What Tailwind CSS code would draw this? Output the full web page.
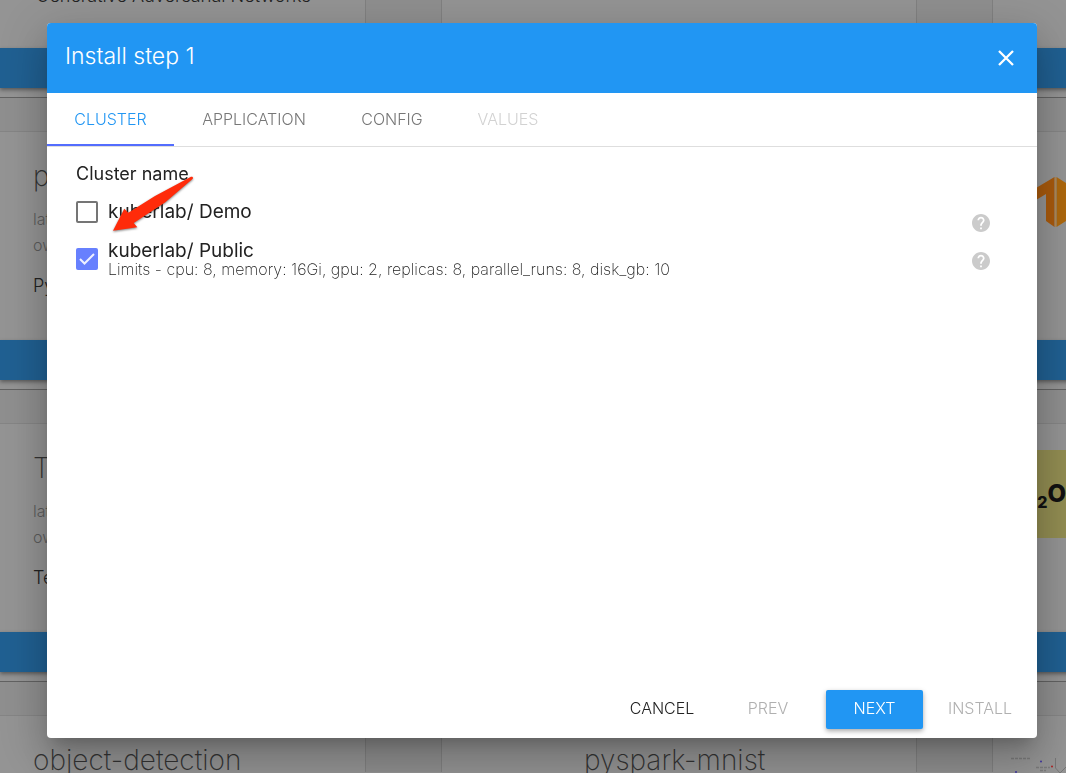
<!DOCTYPE html>
<html lang="en">
<head>
<meta charset="utf-8">
<meta name="viewport" content="width=device-width, initial-scale=1">
<title>Install step 1</title>
<script src="https://cdn.jsdelivr.net/npm/@tailwindcss/browser@4"></script>
</head>
<body class="h-screen overflow-hidden bg-[#949494] font-['Inter','Open_Sans',sans-serif] font-light text-[#222]">

<!-- Catalog behind the dialog -->
<main class="-mt-[195px] -mr-9 grid grid-cols-2" aria-hidden="true">
  <article>
    <div class="h-[34px] border-t border-[#626262] bg-[#8f8f8f]"></div>
    <div class="flex h-[209px] border-t border-[#858585]">
      <div class="flex-1 border-r border-[#818181] pt-36 pl-9 text-[18px] leading-6">Generative Adversarial Networks</div>
      <div class="w-[76px] border-r border-[#818181] bg-[#8f8f8f]"></div><div class="w-[109px]"></div>
    </div>
    <div class="mb-[9px] h-10 bg-[#206092] shadow-[0_2px_4px_rgba(0,0,0,0.4)]"></div>
  </article>
  <article>
    <div class="h-[34px] border-t border-[#626262] bg-[#8f8f8f]"></div>
    <div class="flex h-[209px] border-t border-[#858585]">
      <div class="flex-1 border-r border-[#818181]"></div>
      <div class="w-[76px] border-r border-[#818181] bg-[#8f8f8f]"></div><div class="w-[109px]"></div>
    </div>
    <div class="mb-[9px] h-10 bg-[#206092] shadow-[0_2px_4px_rgba(0,0,0,0.4)]"></div>
  </article>

  <article>
    <div class="h-[34px] border-t border-[#626262] bg-[#8f8f8f]"></div>
    <div class="h-[209px] border-t border-[#858585] pt-7 pl-[33px]">
      <h2 class="text-[28px] leading-8 font-extralight text-[#333]">pytorch</h2>
      <p class="mt-[14px] text-base leading-[26px] text-[#5c5c5c]">latest<br>owner</p>
      <p class="mt-[14px] text-[18px] leading-7">PyTorch</p>
    </div>
    <div class="mb-[9px] h-10 bg-[#206092] shadow-[0_2px_4px_rgba(0,0,0,0.4)]"></div>
  </article>
  <article>
    <div class="h-[34px] border-t border-[#626262] bg-[#8f8f8f]"></div>
    <div class="flex h-[209px] justify-end border-t border-[#858585] pt-[45px]">
      <svg class="mr-9 h-[52px] w-[30px]" viewBox="0 0 30 52" fill="none">
        <path d="M0 11 18.500 0V50L10 44V17L0 23Z" fill="#a95a0c"/>
        <path d="M20.500 0 30 6V44L20.500 50Z" fill="#ae680d"/>
        <path d="M19.500 0V50" stroke="#b08a56"/>
      </svg>
    </div>
    <div class="mb-[9px] h-10 bg-[#206092] shadow-[0_2px_4px_rgba(0,0,0,0.4)]"></div>
  </article>

  <article>
    <div class="h-[34px] border-t border-[#626262] bg-[#8f8f8f]"></div>
    <div class="h-[209px] border-t border-[#858585] pt-7 pl-[33px]">
      <h2 class="text-[28px] leading-8 font-extralight text-[#333]">TensorFlow</h2>
      <p class="mt-[14px] text-base leading-[26px] text-[#5c5c5c]">latest<br>owner</p>
      <p class="mt-[14px] text-[18px] leading-7">TensorFlow</p>
    </div>
    <div class="mb-[9px] h-10 bg-[#206092] shadow-[0_2px_4px_rgba(0,0,0,0.4)]"></div>
  </article>
  <article>
    <div class="h-[34px] border-t border-[#626262] bg-[#8f8f8f]"></div>
    <div class="flex h-[209px] justify-end border-t border-[#858585] pt-[26px]">
      <div class="mr-9 flex h-[88px] w-[76px] items-center justify-end bg-[#928d52] text-2xl font-extrabold text-[#111]"><sub class="mt-2 text-base">2</sub>O</div>
    </div>
    <div class="mb-[9px] h-10 bg-[#206092] shadow-[0_2px_4px_rgba(0,0,0,0.4)]"></div>
  </article>

  <article>
    <div class="h-[34px] border-t border-[#626262] bg-[#8f8f8f]"></div>
    <div class="flex h-[57px] border-t border-[#858585]">
      <div class="flex-1 border-r border-[#818181] pt-7 pl-[33px]"><h2 class="text-[28px] leading-8 font-extralight text-[#333]">object-detection</h2></div>
      <div class="w-[76px] border-r border-[#818181] bg-[#8f8f8f]"></div><div class="w-[109px]"></div>
    </div>
  </article>
  <article>
    <div class="h-[34px] border-t border-[#626262] bg-[#8f8f8f]"></div>
    <div class="flex h-[57px] border-t border-[#858585]">
      <div class="flex-1 border-r border-[#818181] pt-7 pl-[33px]"><h2 class="text-[28px] leading-8 font-extralight text-[#333]">pyspark-mnist</h2></div>
      <div class="w-[76px] border-r border-[#818181] bg-[#8f8f8f]"></div>
      <svg class="h-[57px] w-[109px]" viewBox="0 0 109 57" fill="none">
        <path d="M18 42.500H38M43 51.500H57M47 54.500H53" stroke="#7a7a7a" stroke-width="1.500" stroke-dasharray="3 1"/>
        <path d="M62.500 42V52L67 57M67 57 73 51" stroke="#777"/>
        <circle cx="48" cy="45.500" r="1" fill="#4034a0"/><circle cx="23" cy="56" r="1" fill="#4034a0"/><circle cx="59" cy="50.500" r="1" fill="#ad2020"/>
      </svg>
    </div>
  </article>
</main>

<!-- Dialog -->
<div class="fixed inset-0 flex pt-[23px] pr-[29px] pb-[35px] pl-[47px]">
  <section role="dialog" aria-modal="true" aria-labelledby="title" class="flex flex-1 flex-col overflow-hidden rounded-[4px] bg-white shadow-[0_11px_15px_-7px_rgba(0,0,0,0.2),0_24px_38px_3px_rgba(0,0,0,0.14),0_9px_46px_8px_rgba(0,0,0,0.12)]">
    <header class="flex h-[70px] shrink-0 items-center justify-between bg-[#2196f3] pr-[23px] pl-[18px] text-white">
      <h1 id="title" class="pb-1 text-[23px] leading-8">Install step 1</h1>
      <button type="button" aria-label="Close" class="size-4">
        <svg class="size-4" viewBox="0 0 16 16" fill="none" stroke="currentColor" stroke-width="2.300"><path d="M1 1 15 15M15 1 1 15"/></svg>
      </button>
    </header>

    <nav role="tablist" class="flex h-[54px] shrink-0 border-b border-[#dedede] text-base text-[#777]">
      <button type="button" role="tab" aria-selected="true" class="w-[127px] border-b-2 border-[#536dfe] text-[#2196f3]">CLUSTER</button>
      <button type="button" role="tab" aria-selected="false" class="w-40 border-b-2 border-transparent">APPLICATION</button>
      <button type="button" role="tab" aria-selected="false" class="w-[116px] border-b-2 border-transparent">CONFIG</button>
      <button type="button" role="tab" aria-selected="false" disabled class="w-[116px] border-b-2 border-transparent text-[#d2d2d2]">VALUES</button>
    </nav>

    <div class="relative flex-1 pr-[47px] pl-[29px]">
      <h2 class="pt-[15px] text-[18px] leading-6 font-normal">Cluster name</h2>
      <div class="mt-[15px] flex h-[22px] items-center">
        <input id="demo" type="checkbox" class="size-[22px] appearance-none rounded-[2px] border-2 border-[#757575]">
        <label for="demo" class="ml-[10px] flex-1 text-[19px] leading-[22px] font-normal">kuberlab/ Demo</label>
        <button type="button" aria-label="Help for Demo" class="mt-[22px] text-[#cbcbcb]">
          <svg class="size-[18px]" viewBox="0 0 20 20" fill="currentColor"><path d="M10 0C4.480 0 0 4.480 0 10s4.480 10 10 10 10-4.480 10-10S15.520 0 10 0zm1 17H9v-2h2v2zm2.070-7.750-.9.920C11.450 10.900 11 11.500 11 13H9v-.5c0-1.100.450-2.100 1.170-2.830l1.240-1.260C11.780 8.050 12 7.550 12 7c0-1.100-.9-2-2-2s-2 .9-2 2H6c0-2.210 1.790-4 4-4s4 1.790 4 4c0 .880-.360 1.680-.930 2.250z"/></svg>
        </button>
      </div>
      <div class="mt-4 flex h-10 items-center">
        <span class="relative size-[22px]">
          <input id="public" type="checkbox" checked aria-describedby="limits" class="block size-[22px] appearance-none rounded-[2px] bg-[#6780fe]">
          <svg class="pointer-events-none absolute inset-0" viewBox="0 0 22 22" fill="none" stroke="#eef0ff" stroke-width="2"><path d="M4 11 8.500 15.500 18 6"/></svg>
        </span>
        <div class="ml-[10px] flex-1">
          <label for="public" class="block text-[19px] leading-5 font-normal">kuberlab/ Public</label>
          <p id="limits" class="text-base leading-4 font-extralight text-[#222]">Limits - cpu: 8, memory: 16Gi, gpu: 2, replicas: 8, parallel_runs: 8, disk_gb: 10</p>
        </div>
        <button type="button" aria-label="Help for Public" class="mt-1 text-[#cbcbcb]">
          <svg class="size-[18px]" viewBox="0 0 20 20" fill="currentColor"><path d="M10 0C4.480 0 0 4.480 0 10s4.480 10 10 10 10-4.480 10-10S15.520 0 10 0zm1 17H9v-2h2v2zm2.070-7.750-.9.920C11.450 10.900 11 11.500 11 13H9v-.5c0-1.100.450-2.100 1.170-2.830l1.240-1.260C11.780 8.050 12 7.550 12 7c0-1.100-.9-2-2-2s-2 .9-2 2H6c0-2.210 1.790-4 4-4s4 1.790 4 4c0 .880-.360 1.680-.930 2.250z"/></svg>
        </button>
      </div>
      <!-- Pointer to the cluster choice -->
      <svg class="pointer-events-none absolute top-[26px] left-[62px] h-[64px] w-[90px] drop-shadow-[0_1px_1px_rgba(0,0,0,0.5)]" viewBox="0 0 90 64" fill="#ff2b0a"><path d="M4 57.700 15.300 35.700 19.300 39.700 46 23 82 3.700C84 3.500 84.500 5 83.500 6L56 29.500 24.700 50 28.300 54.300Z"/></svg>
    </div>

    <footer class="flex shrink-0 items-center justify-end pr-2 pb-[9px] text-base">
      <button type="button" class="h-[39px] w-24 pb-[3px]">CANCEL</button>
      <button type="button" disabled class="ml-4 h-[39px] w-[84px] pb-[3px] text-[#b0b0b0]">PREV</button>
      <button type="button" class="ml-4 h-[39px] w-[97px] rounded-[2px] bg-[#2196f3] pb-[3px] text-white shadow-[0_2px_5px_rgba(0,0,0,0.35)]">NEXT</button>
      <button type="button" disabled class="ml-2 h-[39px] w-[98px] pb-[3px] text-[#b0b0b0]">INSTALL</button>
    </footer>
  </section>
</div>
</body>
</html>
